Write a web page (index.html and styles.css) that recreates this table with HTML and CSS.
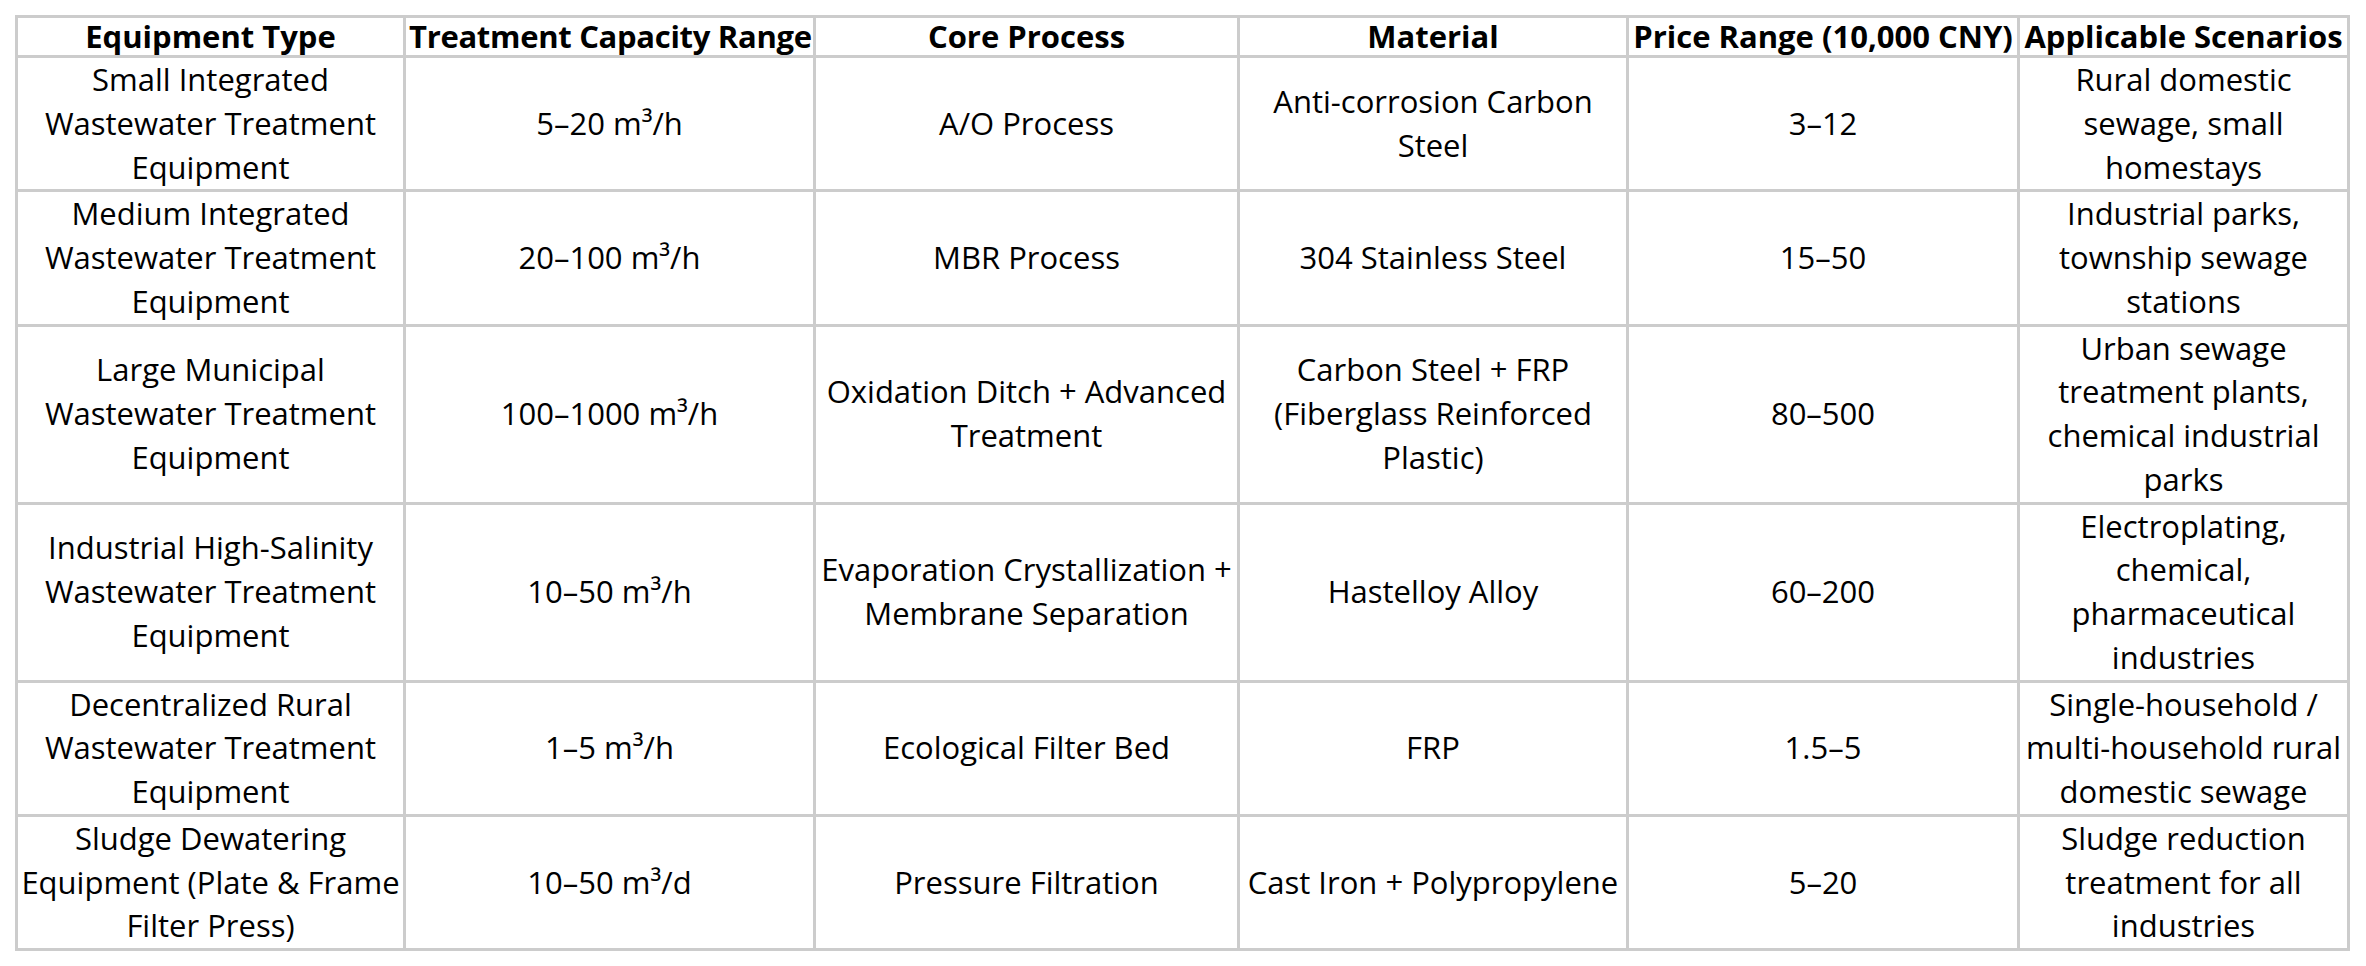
FILE: index.html
```html
<!DOCTYPE html>
<html lang="en">
<head>
<meta charset="utf-8">
<title>Wastewater Treatment Equipment</title>
<link rel="stylesheet" href="styles.css">
</head>
<body>
<table class="spec-table">
  <colgroup>
    <col class="c1"><col class="c2"><col class="c3"><col class="c4"><col class="c5"><col class="c6">
  </colgroup>
  <thead>
    <tr>
      <th>Equipment Type</th>
      <th class="tight">Treatment Capacity Range</th>
      <th>Core Process</th>
      <th>Material</th>
      <th>Price Range (10,000 CNY)</th>
      <th>Applicable Scenarios</th>
    </tr>
  </thead>
  <tbody>
    <tr>
      <td>Small Integrated Wastewater Treatment Equipment</td>
      <td>5–20 m³/h</td>
      <td>A/O Process</td>
      <td>Anti-corrosion Carbon Steel</td>
      <td>3–12</td>
      <td>Rural domestic sewage, small homestays</td>
    </tr>
    <tr>
      <td>Medium Integrated Wastewater Treatment Equipment</td>
      <td>20–100 m³/h</td>
      <td>MBR Process</td>
      <td>304 Stainless Steel</td>
      <td>15–50</td>
      <td>Industrial parks, township sewage stations</td>
    </tr>
    <tr>
      <td>Large Municipal Wastewater Treatment Equipment</td>
      <td>100–1000 m³/h</td>
      <td>Oxidation Ditch + Advanced Treatment</td>
      <td>Carbon Steel + FRP (Fiberglass Reinforced Plastic)</td>
      <td>80–500</td>
      <td>Urban sewage treatment plants, chemical industrial parks</td>
    </tr>
    <tr>
      <td>Industrial High-Salinity Wastewater Treatment Equipment</td>
      <td>10–50 m³/h</td>
      <td>Evaporation Crystallization + Membrane Separation</td>
      <td>Hastelloy Alloy</td>
      <td>60–200</td>
      <td>Electroplating, chemical, pharmaceutical industries</td>
    </tr>
    <tr>
      <td>Decentralized Rural Wastewater Treatment Equipment</td>
      <td>1–5 m³/h</td>
      <td>Ecological Filter Bed</td>
      <td>FRP</td>
      <td>1.5–5</td>
      <td>Single-household / multi-household rural domestic sewage</td>
    </tr>
    <tr>
      <td>Sludge Dewatering Equipment (Plate &amp; Frame Filter Press)</td>
      <td>10–50 m³/d</td>
      <td>Pressure Filtration</td>
      <td>Cast Iron + Polypropylene</td>
      <td>5–20</td>
      <td>Sludge reduction treatment for all industries</td>
    </tr>
  </tbody>
</table>
</body>
</html>
```

FILE: styles.css
```css
html, body {
  margin: 0;
  padding: 0;
  background: #ffffff;
}

body {
  padding: 15px 0 0 15px;
  font-family: "Open Sans", "Noto Sans", sans-serif;
  font-size: 31px;
  color: #000000;
}

.spec-table {
  border-collapse: separate;
  border-spacing: 0;
  table-layout: fixed;
  width: 2335px;
  border-top: 3px solid #cccccc;
  border-left: 3px solid #cccccc;
}

.c1 { width: 388px; }
.c2 { width: 410px; }
.c3 { width: 424px; }
.c4 { width: 389px; }
.c5 { width: 391px; }
.c6 { width: 330px; }

.spec-table th,
.spec-table td {
  border-right: 3px solid #cccccc;
  border-bottom: 3px solid #cccccc;
  padding: 0 3px;
  text-align: center;
  vertical-align: middle;
}

.spec-table th {
  font-weight: 700;
  line-height: 37px;
  white-space: nowrap;
}

.spec-table th.tight {
  letter-spacing: -0.3px;
}

.spec-table td {
  font-weight: 400;
  line-height: 43.75px;
}
```
